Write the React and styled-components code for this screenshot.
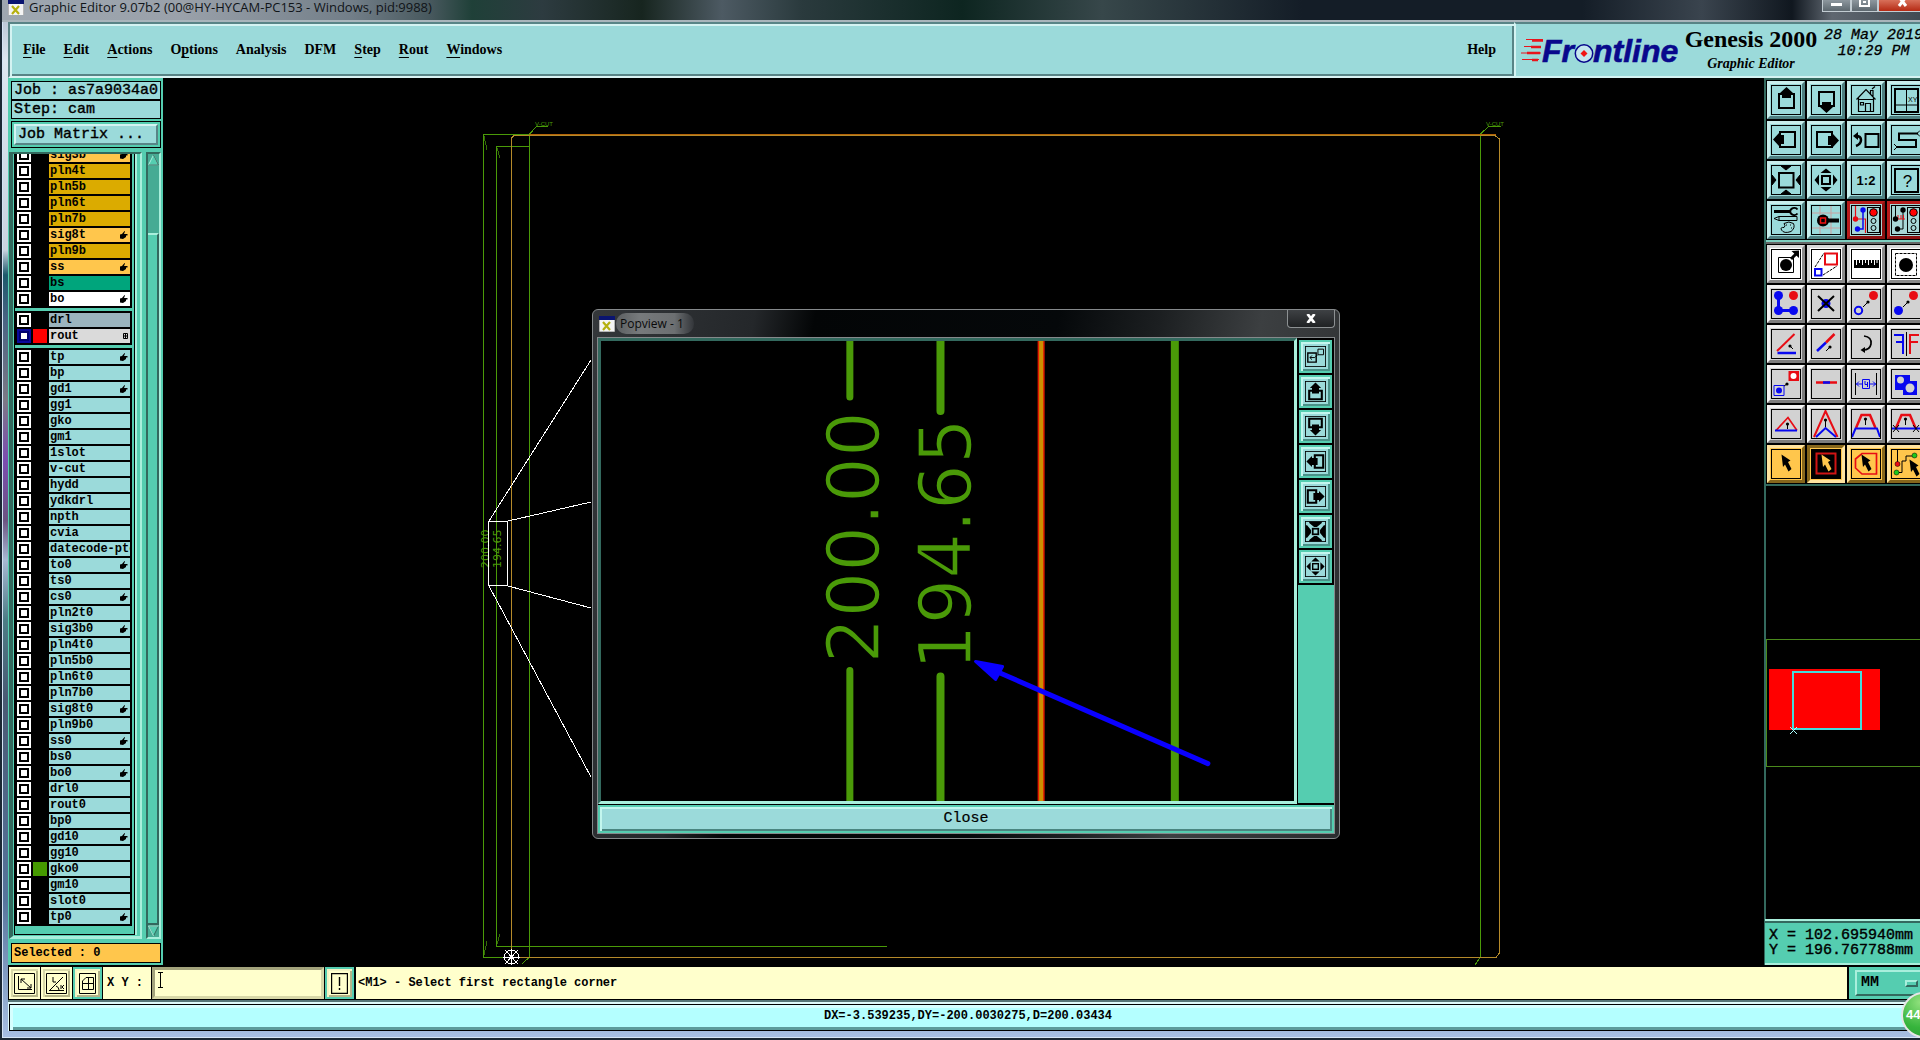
import React from "react";
import styled, { createGlobalStyle, css } from "styled-components";

const MONO = '"Liberation Mono", "DejaVu Sans Mono", monospace';
const SERIF = '"Liberation Serif", "DejaVu Serif", serif';
const UI = '"Open Sans", "Noto Sans", sans-serif';

const c = {
  face: "#9bdada",
  faceLight: "#d4f3f2",
  faceDark: "#588486",
  teal: "#55cdb0",
  tealLight: "#a9efdc",
  tealDark: "#33695e",
  tealMid: "#46ab94",
  cream: "#ffffcc",
  amber: "#ffc64c",
  plot: "#4a9a08",
};

const GlobalStyle = createGlobalStyle`
  * { box-sizing: border-box; }
  html, body { margin: 0; background: #000; overflow: hidden; }
  button, input, select { font: inherit; color: inherit; margin: 0; padding: 0; border-radius: 0; }
  svg { display: block; }
`;

const bevel = (light, dark, w = 2) => css`
  border: ${w}px solid;
  border-color: ${light} ${dark} ${dark} ${light};
`;

/* ---------- window frame ---------- */

const Screen = styled.div`
  position: relative;
  height: 100vh;
  overflow: hidden;
  font-family: ${MONO};
  color: #000;
`;

const Window = styled.div`
  width: calc(100% + 16px);
  height: 100%;
  display: flex;
  flex-direction: column;
  padding: 0 8px 9px;
  background: linear-gradient(180deg, #a9b8c8 0, #dde6f0 60px, #c9d3e0 250px, #1d5a6c 275px, #4a6484 320px, #7c7a86 400px, #7c4db0 460px, #6c5482 520px, #a8b9d4 560px, #4d7d86 620px, #4a5a74 700px, #56759c 900px, #a9c0e4 100%);
  box-shadow: inset 2px -2px 0 #1b2733, inset 3px -3px 0 #d5e4f5;
`;

const TitleBar = styled.div`
  display: flex;
  align-items: flex-start;
  height: 22px;
  margin: 0 -6px;
  padding-left: 6px;
  flex: none;
  border-bottom: 2px solid #a9b5bb;
  background: linear-gradient(90deg, #9ea7b0 0, #9aa1aa 180px, #727e88 350px, #46575c 430px, #1f4038 470px, #2d3b40 540px, #17251f 640px, #4d5a63 720px, #2a3a3d 800px, #0d2520 960px, #37474a 1100px, #141d27 1300px, #141d27 1580px, #3a444e 1700px, #10171f 1790px, #5f6770 1830px, #3c464e 100%);
`;

const TitleIconBox = styled.span`
  width: 16px;
  height: 15px;
  overflow: hidden;
`;

const Title = styled.span`
  flex: 1;
  padding-left: 5px;
  font: 13px/14px ${UI};
  color: #101418;
`;

const Controls = styled.div`
  display: flex;
  margin-right: 8px;
`;

const ControlButton = styled.button`
  width: ${(p) => p.$w}px;
  height: 12px;
  display: flex;
  justify-content: center;
  border: 1px solid #c2ccd2;
  border-top: 0;
  background: ${(p) => (p.$close ? "linear-gradient(#d8705a, #b52a14)" : "linear-gradient(#8d979e, #5d686f)")};
`;

/* ---------- header ---------- */

const Header = styled.header`
  display: flex;
  flex: none;
  height: 56px;
`;

const MenuBar = styled.nav`
  flex: 1;
  display: flex;
  align-items: center;
  gap: 18px;
  padding: 0 18px 0 13px;
  background: ${c.face};
  border: 2px solid ${c.faceDark};
  border-width: 2px 0 2px 2px;
  box-shadow: inset 2px 2px 0 ${c.faceLight}, inset -2px -2px 0 ${c.faceDark};
  border-bottom-color: #d9f3f3;
`;

const MenuItem = styled.button`
  border: 0;
  background: none;
  font: bold 14px/18px ${SERIF};
  margin-left: ${(p) => (p.$last ? "auto" : 0)};
  u { text-underline-offset: 3px; }
`;

const Brand = styled.div`
  display: flex;
  width: 414px;
  padding: 3px 0 0 4px;
  background: ${c.face};
  border: 2px solid ${c.faceLight};
  border-top-color: ${c.faceDark};
`;

const Product = styled.div`
  width: 136px;
  text-align: center;
  font-family: ${SERIF};
  font-weight: bold;
`;

const ProductName = styled.div`
  font-size: 24px;
  line-height: 24px;
  white-space: nowrap;
`;

const ProductPart = styled.div`
  font-size: 14px;
  line-height: 26px;
  font-style: italic;
`;

const Clock = styled.div`
  padding: 1px 0 0 5px;
  font: italic 15px/16px ${MONO};
  text-align: center;
  white-space: pre;
  -webkit-text-stroke: 0.3px #000;
`;

/* ---------- left side ---------- */

const Main = styled.main`
  flex: 1;
  min-height: 0;
  display: flex;
  background: #000;
  padding-bottom: 2px;
`;

const Sidebar = styled.aside`
  width: 155px;
  flex: none;
  display: flex;
  flex-direction: column;
  padding: 3px 2px 2px 3px;
  background: ${c.teal};
`;

const InfoBox = styled.div`
  height: 19px;
  flex: none;
  border: 1px solid #000;
  padding-left: 2px;
  background: ${c.face};
  font-size: 15px;
  line-height: 18px;
  white-space: pre;
  overflow: hidden;
  -webkit-text-stroke: 0.4px #000;
`;

const MatrixFrame = styled.div`
  margin-top: 2px;
  padding: 2px;
  border: 1px solid #000;
  flex: none;
`;

const MatrixButton = styled.button`
  display: block;
  width: 100%;
  height: 21px;
  padding-left: 2px;
  ${bevel(c.faceLight, c.faceDark)}
  background: ${c.face};
  font-size: 15px;
  line-height: 16px;
  text-align: left;
  -webkit-text-stroke: 0.4px #000;
`;

const LayerArea = styled.div`
  flex: 1;
  min-height: 0;
  display: flex;
  margin: 4px 0 4px -2px;
`;

const LayerFrame = styled.div`
  width: 133px;
  display: flex;
  border: 2px solid;
  border-width: 2px 2px 3px 4px;
  border-color: ${c.tealDark} ${c.tealLight} ${c.tealLight} ${c.tealDark};
  padding: 0 5px 1px 1px;
`;

const LayerView = styled.div`
  flex: 1;
  min-width: 0;
  overflow: hidden;
  border: solid #000;
  border-width: 0 1px 1px 1px;
  padding-right: 2px;
  box-shadow: 2px 0 0 ${c.tealLight};
`;

const Group = styled.div`
  background: #000;
  padding: 2px 2px 0;
  margin-bottom: 3px;
  &:first-child { margin-top: -8px; }
`;

const Row = styled.label`
  display: grid;
  grid-template-columns: 14px 14px minmax(0, 1fr);
  gap: 2px;
  height: 14px;
  margin-bottom: 2px;
  &:last-child { margin-bottom: 0; border-bottom: 2px solid #000; height: 16px; }
`;

const Tick = styled.input`
  appearance: none;
  width: 14px;
  height: 14px;
  background: #fff;
  border: 2px solid ${(p) => (p.checked ? "#0a0a9c" : "#fff")};
  box-shadow: inset 0 0 0 2px ${(p) => (p.checked ? "#000070" : "#000")};
`;

const Swatch = styled.span`
  background: ${(p) => p.$color || "#000"};
`;

const Name = styled.span`
  display: flex;
  align-items: center;
  min-width: 0;
  height: 14px;
  padding: 0 2px 0 1px;
  background: ${(p) => p.$bg};
  font: bold 12px/13px ${MONO};
  white-space: nowrap;
  overflow: hidden;
  svg { margin-left: auto; flex: none; }
`;

const Scroll = styled.div`
  width: 15px;
  margin-left: 4px;
  display: flex;
  flex-direction: column;
  background: ${c.tealMid};
  border: 2px solid;
  border-color: ${c.tealDark} ${c.tealLight} ${c.tealLight} ${c.tealDark};
`;

const ScrollArrow = styled.button`
  height: 12px;
  border: 0;
  background: none;
`;

const Thumb = styled.div`
  flex: 1;
  margin-top: 67px;
  background: ${c.teal};
  ${bevel(c.tealLight, c.tealDark)}
  border-left-width: 0;
`;

const Selected = styled.div`
  height: 20px;
  flex: none;
  border: 1px solid #000;
  padding-left: 2px;
  background: ${c.amber};
  font: bold 12px/18px ${MONO};
`;

/* ---------- canvas and pop-up ---------- */

const Canvas = styled.section`
  flex: 1;
  min-width: 0;
  position: relative;
  overflow: hidden;
  background: #000;
`;

const Popup = styled.section`
  position: absolute;
  left: 429px;
  top: 231px;
  width: 748px;
  display: flex;
  flex-direction: column;
  padding: 0 4px 4px;
  border: 1px solid #85898b;
  border-radius: 6px;
  background: linear-gradient(100deg, #34373a 0, #24272a 160px, #030506 220px, #05080a 460px, #1c1f21 560px, #3c3f41 660px, #2a2c2e 100%);
`;

const PopupTitle = styled.div`
  display: flex;
  height: 27px;
  align-items: center;
  padding-left: 2px;
`;

const PopupName = styled.h2`
  flex: 1;
  margin: 0;
  padding-left: 1px;
  font: 12px/24px ${UI};
  color: #0a0a0a;
  span {
    padding: 2px 10px 2px 4px;
    background: linear-gradient(90deg, #5c5f61, #777a7c 30%, #6c6f71 75%, #33363a);
    border-radius: 10px;
  }
`;

const PopupClose = styled.button`
  width: 48px;
  height: 18px;
  align-self: flex-start;
  border: 1px solid #8d9193;
  border-top: 0;
  border-radius: 0 0 4px 4px;
  background: linear-gradient(#3e4144, #202224);
  display: flex;
  align-items: center;
  justify-content: center;
`;

const PopupBody = styled.div`
  border: 1px solid #85898b;
  background: #000;
`;

const PopupRow = styled.div`
  display: flex;
`;

const View = styled.div`
  flex: 1;
  min-width: 0;
  height: 466px;
  overflow: hidden;
  border: 3px solid;
  border-color: ${c.tealDark} ${c.tealLight} ${c.tealLight} ${c.tealDark};
`;

const ViewTools = styled.div`
  display: flex;
  flex-direction: column;
  gap: 2px;
  width: 36px;
  margin: 2px 0 1px 1px;
  padding: 0 1px;
  background: linear-gradient(#000 245px, ${c.teal} 245px);
`;

const ViewButton = styled.button`
  width: 33px;
  height: 33px;
  display: flex;
  align-items: center;
  justify-content: center;
  background: ${c.face};
  border: 2px solid ${c.teal};
  box-shadow: inset 2px 2px 0 #c3f6ee, inset -2px -2px 0 #4a9188;
`;

const CloseButton = styled.button`
  height: 28px;
  display: block;
  width: 100%;
  margin-top: 1px;
  border: 2px solid ${c.teal};
  background: ${c.face};
  box-shadow: inset 2px 2px 0 #c3f6ee, inset -2px -2px 0 #4a8580;
  font-size: 15px;
  line-height: 22px;
  -webkit-text-stroke: 0.2px #000;
`;

/* ---------- right side ---------- */

const Tools = styled.aside`
  width: 164px;
  flex: none;
  display: flex;
  flex-direction: column;
  border-left: 2px solid ${c.tealDark};
`;

const ToolGrid = styled.div`
  display: grid;
  grid-template-columns: repeat(4, 38px);
  gap: 2px;
  padding: 1px;
  border-top: 2px solid ${(p) => (p.$second ? "#666" : c.tealDark)};
  border-bottom: 2px solid ${(p) => (p.$second ? c.tealDark : "#7ecfc0")};
`;

const tones = {
  cyan: [c.face, "#c8eeec", "#4f7f80"],
  white: ["#fff", "#d8d8d8", "#8a8a8a"],
  gray: ["#d2d2d2", "#f4f4f4", "#7d7d7d"],
  amber: [c.amber, "#ffe3a0", "#86661c"],
  pressed: [c.amber, "#86661c", "#ffe3a0"],
  red: ["#a8d6d6", "#b81c1c", "#8a1010"],
};

const ToolButton = styled.button`
  width: 38px;
  height: 38px;
  display: flex;
  align-items: center;
  justify-content: center;
  background: ${(p) => tones[p.$tone][0]};
  ${(p) => bevel(tones[p.$tone][1], tones[p.$tone][2], 3)}
`;

const MiniMap = styled.div`
  flex: 1;
  min-height: 0;
  overflow: hidden;
`;

const Coords = styled.div`
  height: 46px;
  flex: none;
  margin-left: -1px;
  padding: 7px 0 0 4px;
  background: ${c.teal};
  border-top: 2px solid ${c.tealLight};
  border-bottom: 2px solid ${c.tealLight};
  box-shadow: inset 0 2px 0 ${c.tealDark};
  font-size: 15px;
  line-height: 15px;
  white-space: pre;
  -webkit-text-stroke: 0.4px #000;
`;

/* ---------- bottom ---------- */

const CommandBar = styled.div`
  display: flex;
  flex: none;
  height: 33px;
  gap: 1px;
  padding: 0 0 1px 1px;
  background: #000;
  font: bold 12px/32px ${MONO};
`;

const CommandButton = styled.button`
  width: ${(p) => p.$w}px;
  display: flex;
  align-items: center;
  justify-content: center;
  background: ${c.cream};
  border: 2px solid ${(p) => (p.$on ? c.teal : c.cream)};
  box-shadow: inset 2px 2px 0 ${(p) => (p.$on ? "#f4f4c4" : "#d8d8a8")}, inset -2px -2px 0 #b4b488;
`;

const XYLabel = styled.label`
  width: 48px;
  padding-left: 4px;
  background: ${c.cream};
  white-space: pre;
`;

const XYField = styled.div`
  position: relative;
  width: 172px;
  svg { position: absolute; left: 5px; top: 5px; pointer-events: none; }
`;

const XYInput = styled.input`
  display: block;
  width: 100%;
  height: 100%;
  padding-left: 6px;
  background: ${c.cream};
  border: 3px solid;
  border-color: #a3a37c #d8d8a8 #d8d8a8 #a3a37c;
  outline: none;
`;

const Message = styled.div`
  flex: 1;
  margin-left: 1px;
  padding-left: 2px;
  background: ${c.cream};
`;

const UnitBox = styled.div`
  display: flex;
  align-items: center;
  width: 79px;
  margin-left: 1px;
  padding: 3px 0 3px 6px;
  background: ${c.teal};
`;

const UnitField = styled.div`
  flex: 1;
  height: 100%;
  display: flex;
  align-items: center;
  padding-left: 4px;
  ${bevel(c.tealLight, c.tealDark)}
`;

const UnitSelect = styled.select`
  appearance: none;
  width: 44px;
  border: 0;
  background: none;
  font: bold 15px/20px ${MONO};
`;

const Knob = styled.span`
  width: 13px;
  height: 7px;
  background: ${c.teal};
  ${bevel(c.tealLight, c.tealDark)}
`;

const Status = styled.footer`
  flex: none;
  height: 31px;
  padding: 2px 1px 1px;
  background: #dffafa;
  border-top: 2px solid #567577;
`;

const StatusText = styled.div`
  height: 27px;
  border: 1px solid #000;
  background: #b4ffff;
  box-shadow: inset 3px 3px 0 #d6ffff, inset -3px -3px 0 #5d9c9c;
  font: bold 12px/23px ${MONO};
  text-align: center;
`;

const Ball = styled.div`
  position: absolute;
  right: -27px;
  bottom: 2px;
  width: 46px;
  height: 46px;
  border: 2px solid #e6e6e6;
  border-radius: 50%;
  background: radial-gradient(circle at 40% 20%, #8fe07c, #36b43c 60%, #2a9a36);
  color: #fff;
  font: bold 13px/42px "Liberation Sans", sans-serif;
  padding-left: 3px;
`;

/* ---------- drawings ---------- */

const B = "#0808f0";
const R = "#e80c14";

const AppGlyph = () => (
  <svg width="16" height="16" viewBox="0 0 16 16">
    <path d="M0 0h16v16H0z" fill="#f4f4f4" stroke="#777" />
    <path d="M0 0h16v4H0z" fill="#0a1470" />
    <path d="M4 6l7 8M11 6l-7 8" stroke="#b5b010" strokeWidth="2.2" />
  </svg>
);

const Hand = () => (
  <svg width="8" height="8" viewBox="0 0 8 8">
    <path d="M0 3.500L2 3L4.500 0L5 .5L4 3H7.500V4.500H6V6L3 8L0 7.500Z" fill="#000" />
  </svg>
);

const GridMark = () => (
  <svg width="5" height="6" viewBox="0 0 5 6">
    <path d="M.5.5h4v5h-4zM2.500 0v6M0 3h5" stroke="#000" fill="none" />
  </svg>
);

const arrowUp = "M15.5 2L22 8H20V13H11V8H9Z";
const smallArrow = (x1, y1, x2, y2) => (
  <>
    <path d={`M${x1} ${y1}L${x2} ${y2}`} stroke="#000" strokeWidth="1" />
    <circle cx={x2} cy={y2} r="1.6" fill="#000" />
  </>
);

const Pointer = ({ fill = "#000" }) => (
  <path d="M10.500 5.500L19.500 11.500L17 13L20.500 20L17.500 22.500L14 15.500L12 18Z" fill={fill} />
);

const Traffic = () => (
  <>
    <rect x="16.500" y="2.500" width="12" height="25" fill="#a8d6d6" stroke="#000" />
    <circle cx="22.500" cy="7.500" r="3.800" fill="#f00" stroke="#000" />
    <circle cx="22.500" cy="16" r="2.500" fill="none" stroke="#000" />
    <circle cx="22.500" cy="23" r="2.500" fill="none" stroke="#000" />
  </>
);

const PanSmall = ({ turn }) => (
  <g transform={`rotate(${turn} 15 15)`}>
    <path d="M6 14h18v12H6z" fill="none" stroke="#000" strokeWidth="3" />
    <path d="M15 2L23 10H20V18H10V10H7Z" />
  </g>
);

const art = {
  up: <><rect x="8" y="9" width="15" height="14" fill="none" stroke="#000" strokeWidth="2" /><path d={arrowUp} /></>,
  down: <><rect x="8" y="7" width="15" height="14" fill="none" stroke="#000" strokeWidth="2" /><path d={arrowUp} transform="rotate(180 15.500 15)" /></>,
  home: <path d="M5.500 14.500L15 4.500L24.500 14.500M7.500 13V26.500H22.500V13M7 14.500H23M14.500 26V18.500H19.500V26M9.500 17.500h3v2.500h-3zM19.500 9V5.500H22V12M21 4L24 1.500" fill="none" stroke="#000" strokeWidth="1.200" />,
  split: <><path d="M4 4h23v23H4z" fill="none" stroke="#000" strokeWidth="2" /><path d="M15.500 4v23M4 20h23" stroke="#000" /><text x="17" y="17" fontSize="7" fontFamily="Liberation Sans, sans-serif">XY</text></>,
  left: <><rect x="9" y="7" width="15" height="15" fill="none" stroke="#000" strokeWidth="2" /><path d={arrowUp} transform="rotate(-90 15 15)" /></>,
  right: <><rect x="6" y="7" width="15" height="15" fill="none" stroke="#000" strokeWidth="2" /><path d={arrowUp} transform="rotate(90 15 15)" /></>,
  back: <><rect x="14.500" y="9" width="13" height="13" fill="none" stroke="#000" strokeWidth="2" /><path d="M5 11Q10 11 10 15T5 21" fill="none" stroke="#000" strokeWidth="2.500" /><path d="M2 11L7 7V15Z" /></>,
  snake: <><path d="M27 8.500H8V15H25V22H6" fill="none" stroke="#000" strokeWidth="2" /><path d="M26 8.500l3-3M26 8.500l3 3M6 22l-3-3M6 22l-3 3" stroke="#000" /></>,
  zoomIn: <><rect x="8" y="8" width="14.500" height="14.500" fill="none" stroke="#000" strokeWidth="2" /><path d="M10 1h10l-5 4zM10 29h10l-5-4zM1 10v10l4-5zM29 10v10l-4-5z" stroke="#000" /></>,
  zoomOut: <><rect x="11" y="11" width="8" height="8" fill="none" stroke="#000" strokeWidth="2" /><path d="M9.500 8h11L15 3.500zM9.500 22h11L15 26.500zM8 9.500v11L3.500 15zM22 9.500v11L26.500 15z" /></>,
  ratio: <text x="15" y="19.500" textAnchor="middle" fontSize="13" fontWeight="bold" fontFamily="Liberation Sans, sans-serif">1:2</text>,
  help: <><path d="M4 4h23v23H4z" fill="none" stroke="#000" strokeWidth="2" /><text x="16.500" y="21.500" textAnchor="middle" fontSize="17" fontFamily="Liberation Sans, sans-serif">?</text></>,
  tools: <><path d="M3 6.500H20" stroke="#000" strokeWidth="3" /><path d="M26.500 4.500A4 3.500 0 1 0 26.500 8.500" fill="none" stroke="#000" strokeWidth="2" /><path d="M3 13.500L8 11.500H26V15.500H8ZM8 11.500V15.500" fill="none" stroke="#000" /><path d="M13 18.500Q18 15.500 22.500 18.500Q24.500 23 20 26.500Q13 29 10.500 25Q9 22 13 22.500Q15 21 13 18.500Z" fill="none" stroke="#000" /><path d="M15 20h1M19 20h1M20 23h1" stroke="#000" /></>,
  probe: <><path d="M9 1v28M20 1v28M1 8h28M1 23h28" stroke="#c9a0a0" /><path d="M14 15.500H28" stroke="#000" strokeWidth="4" /><circle cx="12" cy="15.500" r="6" /><path d="M9.500 13h5v5h-5z" fill="none" stroke="#f01010" strokeWidth="1.500" /></>,
  light1: <><path d="M4.500 1V14H14.500V28" fill="none" stroke={R} strokeWidth="1.200" /><path d="M12 5V24H6" fill="none" stroke={B} strokeWidth="1.500" /><circle cx="4.500" cy="14" r="2.700" fill={R} /><circle cx="12" cy="5" r="2.700" fill={B} /><circle cx="6.500" cy="24" r="2.700" fill={B} /><Traffic /></>,
  light2: <><path d="M4.500 1V14M12 5V24H6" fill="none" stroke="#000" /><path d="M7 10V14H14M10 10v4M12.500 10v4" fill="none" stroke={R} /><circle cx="4.500" cy="14" r="2.700" /><circle cx="12" cy="5" r="2.700" /><circle cx="6.500" cy="24" r="2.700" /><Traffic /></>,
  pad: <><path d="M7.500 8.500h15v15h-15z" fill="none" stroke="#000" /><circle cx="15" cy="16" r="6" /><path d="M20 10L25 5" stroke="#000" strokeWidth="3" /><path d="M28 1.500V9L20.500 2Z" /></>,
  scale: <><path d="M14 4.500h12v11H14z" fill="none" stroke={R} strokeWidth="2" /><path d="M4 20h6.500v6.500H4z" fill="none" stroke={B} strokeWidth="2" /><path d="M4 18L13 4M12 26L26 17" stroke="#000" strokeDasharray="3 1" /></>,
  ruler: <><path d="M3 11h25v8H3z" /><path d="M5.500 11v5M8.500 11v3M11.500 11v5M14.500 11v3M17.500 11v5M20.500 11v3M23.500 11v5M26 11v3" stroke="#fff" /></>,
  dashed: <><path d="M4.500 4.500h21v22h-21z" fill="none" stroke="#000" strokeDasharray="3 1" /><circle cx="15" cy="16" r="7" /></>,
  chain: <><path d="M7.500 6.500V21.500H22" fill="none" stroke={B} strokeWidth="3" /><circle cx="7.500" cy="6.500" r="4.500" fill={B} /><circle cx="7.500" cy="21.500" r="4.500" fill={B} /><circle cx="22.500" cy="21.500" r="4.500" fill={B} /><circle cx="22.500" cy="6.500" r="4.500" fill={R} /></>,
  remove: <><circle cx="15" cy="14.500" r="4.500" fill={B} /><path d="M7 7L23 22M23 7L7 22" stroke="#000" strokeWidth="2" /></>,
  move: <><circle cx="7.500" cy="21.500" r="3.700" fill="none" stroke={B} strokeWidth="2" /><circle cx="22.500" cy="6.500" r="4.500" fill={R} />{smallArrow(12, 18, 17, 13)}</>,
  copy: <><circle cx="7.500" cy="21.500" r="4.500" fill={B} /><circle cx="22.500" cy="6.500" r="4.500" fill={R} />{smallArrow(12, 18, 17, 13)}</>,
  rotate: <><path d="M6 22L23.500 5" stroke={R} strokeWidth="2" /><path d="M6.500 24H25" stroke={B} strokeWidth="2.500" />{smallArrow(22, 20, 19, 17)}</>,
  stretch: <><path d="M6 22L15 13.500" stroke={B} strokeWidth="2.500" /><path d="M15 13.500L23.500 5" stroke={R} strokeWidth="2.500" />{smallArrow(15, 22, 19, 18)}</>,
  turn: <><path d="M13 7Q21 8 20 15Q19 21 12 21" fill="none" stroke="#000" strokeWidth="1.700" /><path d="M9.500 21L14 18V24Z" /></>,
  mirror: <><path d="M15.500 3V27" stroke="#000" /><path d="M12 25V6H3M12 13H5" fill="none" stroke={B} strokeWidth="2" /><path d="M19 25V6H28M19 13H27" fill="none" stroke={R} strokeWidth="2" /></>,
  swap: <><path d="M17.500 2h10.500v10H17.500z" fill={R} /><circle cx="22.500" cy="7" r="3" fill="#fff" /><path d="M3 16.500h10v10H3z" fill="none" stroke={B} /><circle cx="8" cy="21.500" r="3" fill={B} />{smallArrow(13, 17, 16, 15)}</>,
  line: <><path d="M5 13.500H26" stroke={R} strokeWidth="2.500" /><path d="M12 13.500H19" stroke={B} strokeWidth="2.500" /></>,
  width: <><path d="M4.500 4V26M25.500 4V26" stroke="#000" /><path d="M5 15H11M19 15H25M8 12.500L5.500 15L8 17.500M22 12.500L24.500 15L22 17.500M11.500 10.500h7v9h-7z" fill="none" stroke={B} /><path d="M14 12v3.500h3M16.500 13v5" stroke={B} fill="none" /></>,
  merge: <><path d="M4 6h15v6h7v14H12V21H4z" fill={B} /><circle cx="9.500" cy="11" r="3.500" fill="#d2d2d2" /><circle cx="19" cy="19" r="4.500" fill="#d2d2d2" /></>,
  tri: <><path d="M5 21.500L17 8.500L26 21.500" fill="none" stroke={R} strokeWidth="1.700" /><path d="M4 21.500H26" stroke={B} strokeWidth="2" />{smallArrow(16.5, 20, 16.5, 15)}</>,
  peak: <><path d="M3 28L14.500 2L26.500 28" fill="none" stroke={R} strokeWidth="2" /><path d="M5 28L14.500 19L25 28" fill="none" stroke={B} strokeWidth="2" />{smallArrow(14.5, 18, 14.5, 11)}</>,
  trap: <><path d="M5 19L10.500 6H19L24.500 19" fill="none" stroke={R} strokeWidth="2.500" /><path d="M1 28L4.500 19.500H26L29 28" fill="none" stroke={B} strokeWidth="2" />{smallArrow(14.5, 16, 14.5, 10)}</>,
  cut: <><path d="M5 19L10.500 6H19L24.500 19" fill="none" stroke={R} strokeWidth="2.500" /><path d="M1 19.500H29" stroke={B} strokeWidth="2" /><path d="M2 16l6 7M8 16l-6 7M22 16l6 7M28 16l-6 7" stroke="#000" />{smallArrow(14.5, 16, 14.5, 10)}</>,
  pick: <Pointer />,
  box: <><path d="M0 0h30v30H0z" /><path d="M5.500 4.500h19v20h-19z" fill="none" stroke="#d01414" strokeWidth="2" /><Pointer fill={c.amber} /></>,
  poly: <><path d="M11 4.500H25.500V25H11L4.500 19V10Z" fill="none" stroke={R} strokeWidth="1.700" /><Pointer /></>,
  net: <><path d="M6.500 1V14M6.500 23.500H11V12H15V7H22" fill="none" stroke="#000" /><circle cx="6.500" cy="15" r="2.500" fill={R} stroke="#000" strokeWidth=".5" /><circle cx="5.500" cy="23.500" r="2.500" fill="#1cc81c" stroke="#000" strokeWidth=".5" /><circle cx="23.500" cy="6.500" r="2.500" fill="#1cc81c" stroke="#000" strokeWidth=".5" /><g transform="translate(8 5)"><Pointer /></g></>,
  popOut: <><path d="M4 10h12v13H4z" fill="none" stroke="#000" strokeWidth="2" /><path d="M18.500 4.500h8v8h-8zM18 12.500L14 16.500H7M10 13.500L7 16.500L10 19.500" fill="none" stroke="#000" strokeWidth="1.400" /></>,
  panUp: <PanSmall turn={0} />,
  panDown: <PanSmall turn={180} />,
  panLeft: <PanSmall turn={-90} />,
  panRight: <PanSmall turn={90} />,
  shrink: <><rect x="11" y="11" width="8" height="8" fill="none" stroke="#000" strokeWidth="2.500" /><path d="M6 1H24V3L17 8.500H13L6 3ZM6 29H24V27L17 21.500H13L6 27ZM1 6V24H3L8.500 17V13L3 6ZM29 6V24H27L21.500 17V13L27 6Z" /></>,
  grow: <><rect x="11" y="11" width="8" height="8" fill="none" stroke="#000" strokeWidth="2" /><path d="M9 8h12L15 2zM9 22h12L15 28zM8 9v12L2 15zM22 9v12L28 15z" /></>,
};

const Icon = ({ name, size = 30 }) => (
  <svg width={size} height={size} viewBox="0 0 30 30">
    {art[name]}
    <rect x=".5" y=".5" width="29" height="29" fill="none" stroke="#000" strokeWidth={30 / size} />
  </svg>
);

const Logo = () => (
  <svg width="163" height="42" viewBox="1519 26 163 42">
    <g stroke="#e8141c" strokeWidth="1">
      <path d="M1525 38.500H1542M1523 45.500H1540M1520 52H1540M1521 58.500H1538" />
      <path d="M1531 39.500H1542M1530 46H1540M1526 52H1539M1531 59H1537" strokeWidth="2.500" />
    </g>
    <g fontFamily="Liberation Sans, sans-serif" fontWeight="bold" fontStyle="italic" fontSize="32" fill="#08088c" stroke="#08088c" strokeWidth=".6">
      <text x="1541" y="61">Fr</text>
      <text x="1592" y="61">ntline</text>
    </g>
    <circle cx="1583" cy="52.500" r="8.700" fill="#c4e6ee" stroke="#08088c" strokeWidth="1.500" />
    <path d="M1583 49l3.500 3.500l-3.500 3.500l-3.500-3.500z" fill="#f01414" />
  </svg>
);

const Board = () => (
  <svg width="100%" height="100%" role="img" aria-label="Board outline">
    <g transform="translate(-163 -78)" fill="none" shapeRendering="crispEdges">
      <g stroke={c.plot}>
        <path d="M483.500 957V134.500H529M496.500 947V146.500H529.500M529.500 134V957M1480.500 134V957M496 946.500H887M483 957.500H512" />
        <path d="M484 136l3 14M497 148l3 10M484 955l3 -14M497 944l3 -10" opacity=".7" />
        <path d="M529.500 134L537 126H548M1480.500 134L1489 126H1501M529.500 957L522 964M1480.500 957L1475 965" />
      </g>
      <path d="M511.500 957.500V138L514 135.500H1495L1499.500 139V953L1496 957.500Z" stroke="#b58a2a" />
      <path d="M529 134.500H1496" stroke="#b4640a" />
      <g fill={c.plot} fontFamily="Liberation Sans, sans-serif" fontSize="6">
        <text x="535" y="126">V-CUT</text>
        <text x="1486" y="126">V-CUT</text>
      </g>
      <g fill={c.plot} fontFamily="DejaVu Sans, sans-serif" fontSize="11" shapeRendering="auto">
        <text transform="translate(489 568) rotate(-90)">200.00</text>
        <text transform="translate(501 568) rotate(-90)">194.65</text>
      </g>
      <g stroke="#fff">
        <path d="M488.500 521.500h19v64h-19z" />
        <path d="M489 521L591 360M508 521L591 502M508 586L591 608M489 586L591 777" />
        <path d="M503 957h17M511.500 949v17M505 950l13 14M518 950l-13 14" />
        <circle cx="511.500" cy="957" r="7" />
      </g>
    </g>
  </svg>
);

const PopView = () => (
  <svg width="100%" height="100%" viewBox="601 341 692 460" preserveAspectRatio="xMinYMin slice" role="img" aria-label="Magnified dimensions">
    <g stroke={c.plot}>
      <path d="M849.500 336V397M849.500 670V810" strokeWidth="7" strokeLinecap="round" />
      <path d="M940 336V411M940 676V810" strokeWidth="8" strokeLinecap="round" />
      <path d="M1174 341V801" strokeWidth="8" />
    </g>
    <path d="M1040.500 341V801" stroke="#e01a00" strokeWidth="7" />
    <path d="M1040.500 341V801" stroke="#cc8f00" strokeWidth="4" />
    <g fill={c.plot} stroke="#000" strokeWidth="1.500" fontFamily="DejaVu Sans, sans-serif" fontSize="72">
      <text transform="translate(879 663) rotate(-90)">200.00</text>
      <text transform="translate(970 670) rotate(-90)">194.65</text>
    </g>
    <path d="M996 671L1207 763" stroke="#0a00ff" strokeWidth="5" strokeLinecap="round" />
    <path d="M975 661L1002 666L995 679Z" fill="#0a00ff" stroke="#0a00ff" strokeLinejoin="round" strokeWidth="3" />
  </svg>
);

/* ---------- data ---------- */

const menus = [["", "F", "ile"], ["", "E", "dit"], ["", "A", "ctions"], ["O", "p", "tions"], ["Analysis"], ["DFM"], ["", "S", "tep"], ["", "R", "out"], ["", "W", "indows"]];

const gold = "#dbab00";
const groups = [
  [["sig3b", c.amber, 1], ["pln4t", gold], ["pln5b", gold], ["pln6t", gold], ["pln7b", gold], ["sig8t", c.amber, 1], ["pln9b", gold], ["ss", c.amber, 1], ["bs", "#00a57c"], ["bo", "#fff", 1]],
  [["drl", "#9bb4be"], ["rout", "#dadada", 2, "#f00"]],
  "tp* bp gd1* gg1 gko gm1 1slot v-cut hydd ydkdrl npth cvia datecode-pto to0* ts0 cs0* pln2t0 sig3b0* pln4t0 pln5b0 pln6t0 pln7b0 sig8t0* pln9b0 ss0* bs0 bo0* drl0 rout0 bp0 gd10* gg10 gko0 gm10 slot0 tp0*"
    .split(" ")
    .map((n) => [n.replace("*", ""), c.face, n.endsWith("*") ? 1 : 0, n === "gko0" ? "#459a00" : null]),
];

const viewTools = ["up", "down", "home", "split", "left", "right", "back", "snake", "zoomIn", "zoomOut", "ratio", "help", "tools", "probe", "light1", "light2"];
const popTools = ["popOut", "panUp", "panDown", "panLeft", "panRight", "shrink", "grow"];
const editTools = [
  ["white", "pad", "scale", "ruler", "dashed"],
  ["gray", "chain", "remove", "move", "copy"],
  ["gray", "rotate", "stretch", "turn", "mirror"],
  ["gray", "swap", "line", "width", "merge"],
  ["gray", "tri", "peak", "trap", "cut"],
  ["amber", "pick", "box", "poly", "net"],
];

export default function App() {
  return (
    <Screen>
      <GlobalStyle />
      <Window>
        <TitleBar>
          <TitleIconBox><AppGlyph /></TitleIconBox>
          <Title>Graphic Editor 9.07b2 (00@HY-HYCAM-PC153 - Windows, pid:9988)</Title>
          <Controls>
            <ControlButton $w={29} aria-label="Minimize">
              <svg width="11" height="8"><path d="M0 3h11v3H0z" fill="#fff" /></svg>
            </ControlButton>
            <ControlButton $w={27} aria-label="Maximize">
              <svg width="11" height="8"><path d="M1 0v6h9V0M4 2h3" fill="none" stroke="#fff" strokeWidth="2" /></svg>
            </ControlButton>
            <ControlButton $w={48} $close aria-label="Close window">
              <svg width="11" height="8"><path d="M2 -3L9 6M9 -3L2 6" stroke="#fff" strokeWidth="3" /></svg>
            </ControlButton>
          </Controls>
        </TitleBar>

        <Header>
          <MenuBar>
            {menus.map(([a, u, b]) => (
              <MenuItem key={a + u + b}>{a}{u && <u>{u}</u>}{b}</MenuItem>
            ))}
            <MenuItem $last>Help</MenuItem>
          </MenuBar>
          <Brand>
            <Logo />
            <Product>
              <ProductName>Genesis 2000</ProductName>
              <ProductPart>Graphic Editor</ProductPart>
            </Product>
            <Clock>{"28 May 2019\n10:29 PM"}</Clock>
          </Brand>
        </Header>

        <Main>
          <Sidebar>
            <InfoBox>Job : as7a9034a0</InfoBox>
            <InfoBox>Step: cam</InfoBox>
            <MatrixFrame><MatrixButton>Job Matrix ...</MatrixButton></MatrixFrame>
            <LayerArea>
              <LayerFrame>
                <LayerView>
                  {groups.map((rows, i) => (
                    <Group key={i}>
                      {rows.map(([name, bg, mark, swatch]) => (
                        <Row key={name}>
                          <Tick type="checkbox" checked={name === "rout"} readOnly />
                          <Swatch $color={swatch} />
                          <Name $bg={bg}>
                            {name}
                            {mark === 1 && <Hand />}
                            {mark === 2 && <GridMark />}
                          </Name>
                        </Row>
                      ))}
                    </Group>
                  ))}
                </LayerView>
              </LayerFrame>
              <Scroll>
                <ScrollArrow aria-label="Scroll up">
                  <svg width="11" height="12"><path d="M5.500 1L10.500 11H.5Z" fill={c.teal} stroke={c.tealLight} /><path d="M5.500 1L10.500 11H.5" fill="none" stroke={c.tealDark} /></svg>
                </ScrollArrow>
                <Thumb />
                <ScrollArrow aria-label="Scroll down">
                  <svg width="11" height="12"><path d="M5.500 11L10.500 1H.5Z" fill={c.teal} stroke={c.tealDark} /><path d="M5.500 11L.5 1H10.500" fill="none" stroke={c.tealLight} /></svg>
                </ScrollArrow>
              </Scroll>
            </LayerArea>
            <Selected>Selected : 0</Selected>
          </Sidebar>

          <Canvas>
            <Board />
            <Popup>
              <PopupTitle>
                <AppGlyph />
                <PopupName><span>Popview - 1</span></PopupName>
                <PopupClose aria-label="Close popview">
                  <svg width="10" height="9"><path d="M1.500 0L8.500 9M8.500 0L1.500 9" stroke="#fff" strokeWidth="2.800" /></svg>
                </PopupClose>
              </PopupTitle>
              <PopupBody>
                <PopupRow>
                  <View><PopView /></View>
                  <ViewTools>
                    {popTools.map((n) => (
                      <ViewButton key={n} aria-label={n}><Icon name={n} size={21} /></ViewButton>
                    ))}
                  </ViewTools>
                </PopupRow>
                <CloseButton>Close</CloseButton>
              </PopupBody>
            </Popup>
          </Canvas>

          <Tools>
            <ToolGrid>
              {viewTools.map((n) => (
                <ToolButton key={n} $tone={n.startsWith("light") ? "red" : "cyan"} aria-label={n}><Icon name={n} /></ToolButton>
              ))}
            </ToolGrid>
            <ToolGrid $second>
              {editTools.flatMap(([tone, ...names]) =>
                names.map((n) => (
                  <ToolButton key={n} $tone={n === "box" ? "pressed" : tone} aria-label={n}><Icon name={n} /></ToolButton>
                ))
              )}
            </ToolGrid>
            <MiniMap>
              <svg width="162" height="433" viewBox="1766 487 162 433" shapeRendering="crispEdges" role="img" aria-label="Overview">
                <path d="M1766.500 640.500H1940V767.500H1766.500Z" fill="none" stroke="#4a8a1c" />
                <path d="M1769 670h111v61h-111z" fill="#f00" />
                <path d="M1793 673h68v57h-68z" fill="none" stroke="#45dcdc" strokeWidth="2" />
                <path d="M1790 728l7 7M1797 728l-7 7" stroke="#a8ffff" />
              </svg>
            </MiniMap>
            <Coords>{"X = 102.695940mm\nY = 196.767788mm"}</Coords>
          </Tools>
        </Main>

        <CommandBar>
          <CommandButton $w={31} aria-label="Snap to end">
            <svg width="21" height="21"><path d="M.5.5h20v20H.5zM4.500 3v13.500H18M7 6l10 9M7 10V6h4M17 11v4h-4" fill="none" stroke="#000" /></svg>
          </CommandButton>
          <CommandButton $w={31} aria-label="Angle mode">
            <svg width="21" height="21"><path d="M.5.5h20v20H.5zM3 17.500H18M4 17L17 4M7 4v5h3M10 13q3 1 3 4M15 12v4M18 12l-2 2 2 2" fill="none" stroke="#000" /></svg>
          </CommandButton>
          <CommandButton $w={29} $on aria-label="Grid mode">
            <svg width="17" height="21"><path d="M.5.5h16v20H.5zM3.500 16.500V8L7 4.500H14.500V16.500ZM9.500 4v12M3 10.500H15" fill="none" stroke="#000" /></svg>
          </CommandButton>
          <XYLabel htmlFor="xy">X Y :</XYLabel>
          <XYField>
            <XYInput id="xy" type="text" />
            <svg width="7" height="16"><path d="M1 .5h5M3.500 1v14M1 15.500h5" stroke="#000" /></svg>
          </XYField>
          <CommandButton $w={29} $on aria-label="Alert">
            <svg width="17" height="21"><path d="M.5.5h16v20H.5zM8.500 4v9M8.500 15v2" fill="none" stroke="#000" strokeWidth="1.400" /></svg>
          </CommandButton>
          <Message>&lt;M1&gt; - Select first rectangle corner</Message>
          <UnitBox>
            <UnitField>
              <UnitSelect aria-label="Units" defaultValue="MM"><option>MM</option></UnitSelect>
              <Knob />
            </UnitField>
          </UnitBox>
        </CommandBar>

        <Status>
          <StatusText>DX=-3.539235,DY=-200.0030275,D=200.03434</StatusText>
        </Status>
      </Window>
      <Ball>44</Ball>
    </Screen>
  );
}
